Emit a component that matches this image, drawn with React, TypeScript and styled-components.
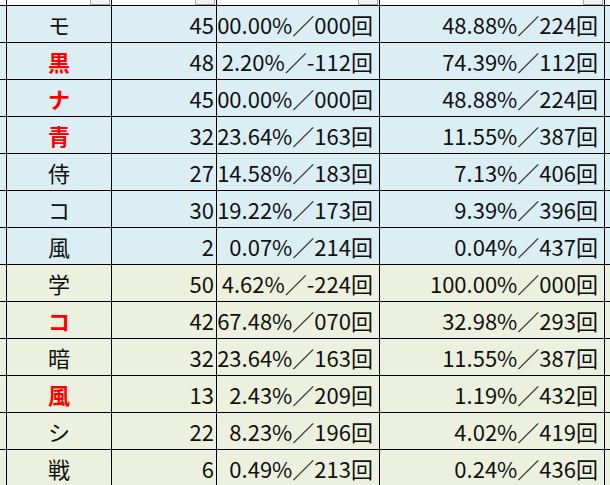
import React from "react";
import styled, { createGlobalStyle } from "styled-components";

const GlobalStyle = createGlobalStyle`
    html, body {
        margin: 0;
        padding: 0;
        background: #000;
        overflow: hidden;
    }
`;

const Sheet = styled.div`
    display: grid;
    grid-template-columns: 6px 104px 104px 162px 224px 6px;
    grid-auto-rows: 36px;
    grid-template-rows: 5px;
    gap: 1px;
    width: 610px;
    height: 485px;
    overflow: hidden;
    background: #000;
    font-family: "Noto Sans CJK JP", "Noto Sans", sans-serif;
    font-size: 22px;
    color: #111;
`;

const HeaderCell = styled.div`
    background: #fff;
    display: flex;
    justify-content: flex-end;
    align-items: flex-end;
    overflow: hidden;
`;

const FilterButton = styled.div`
    width: 18px;
    height: 18px;
    margin-right: 1px;
    flex-shrink: 0;
    background: #f3f3f3;
    border: 1px solid #a9a9a9;
    border-top: none;
`;

const Cell = styled.div<{ $tone: "blue" | "green"; $align?: "center" | "right" }>`
    background: ${({ $tone }) => ($tone === "blue" ? "#daeef3" : "#ebf1de")};
    display: flex;
    align-items: center;
    justify-content: ${({ $align }) => ($align === "center" ? "center" : "flex-end")};
    overflow: hidden;
    white-space: nowrap;
    line-height: 1;
`;

const Mark = styled.span<{ $hot?: boolean }>`
    color: ${({ $hot }) => ($hot ? "#ff0000" : "#111")};
    font-weight: ${({ $hot }) => ($hot ? 700 : 400)};
`;

const CountCell = styled(Cell)`
    padding-right: 2px;
`;

const RateCell = styled(Cell)`
    padding-right: 6px;
`;

interface Row {
    mark: string;
    hot?: boolean;
    count: string;
    rate: string;
    total: string;
}

const rows: Row[] = [
    { mark: "モ", count: "45", rate: "00.00%／000回", total: "48.88%／224回" },
    { mark: "黒", hot: true, count: "48", rate: "2.20%／-112回", total: "74.39%／112回" },
    { mark: "ナ", hot: true, count: "45", rate: "00.00%／000回", total: "48.88%／224回" },
    { mark: "青", hot: true, count: "32", rate: "23.64%／163回", total: "11.55%／387回" },
    { mark: "侍", count: "27", rate: "14.58%／183回", total: "7.13%／406回" },
    { mark: "コ", count: "30", rate: "19.22%／173回", total: "9.39%／396回" },
    { mark: "風", count: "2", rate: "0.07%／214回", total: "0.04%／437回" },
    { mark: "学", count: "50", rate: "4.62%／-224回", total: "100.00%／000回" },
    { mark: "コ", hot: true, count: "42", rate: "67.48%／070回", total: "32.98%／293回" },
    { mark: "暗", count: "32", rate: "23.64%／163回", total: "11.55%／387回" },
    { mark: "風", hot: true, count: "13", rate: "2.43%／209回", total: "1.19%／432回" },
    { mark: "シ", count: "22", rate: "8.23%／196回", total: "4.02%／419回" },
    { mark: "戦", count: "6", rate: "0.49%／213回", total: "0.24%／436回" },
];

export default function App() {
    return (
        <>
            <GlobalStyle />
            <Sheet>
                <HeaderCell />
                <HeaderCell><FilterButton /></HeaderCell>
                <HeaderCell><FilterButton /></HeaderCell>
                <HeaderCell><FilterButton /></HeaderCell>
                <HeaderCell><FilterButton /></HeaderCell>
                <HeaderCell />
                {rows.map((r, i) => {
                    const tone = i < 7 ? "blue" : "green";
                    return (
                        <React.Fragment key={i}>
                            <Cell $tone={tone} />
                            <Cell $tone={tone} $align="center">
                                <Mark $hot={r.hot}>{r.mark}</Mark>
                            </Cell>
                            <CountCell $tone={tone}>{r.count}</CountCell>
                            <RateCell $tone={tone}>{r.rate}</RateCell>
                            <RateCell $tone={tone}>{r.total}</RateCell>
                            <Cell $tone={tone} />
                        </React.Fragment>
                    );
                })}
            </Sheet>
        </>
    );
}
